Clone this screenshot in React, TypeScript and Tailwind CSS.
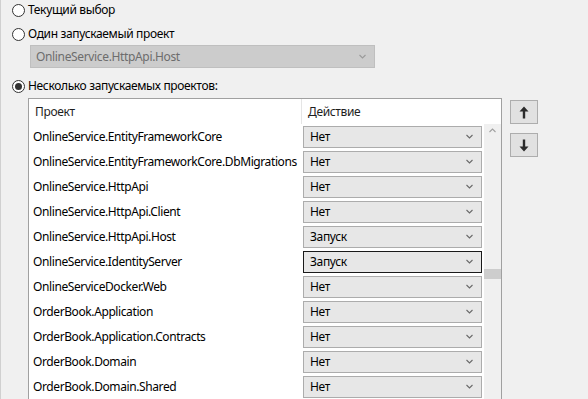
import React from "react";

const rows: [string, string][] = [
  ["OnlineService.EntityFrameworkCore", "Нет"],
  ["OnlineService.EntityFrameworkCore.DbMigrations", "Нет"],
  ["OnlineService.HttpApi", "Нет"],
  ["OnlineService.HttpApi.Client", "Нет"],
  ["OnlineService.HttpApi.Host", "Запуск"],
  ["OnlineService.IdentityServer", "Запуск"],
  ["OnlineServiceDocker.Web", "Нет"],
  ["OrderBook.Application", "Нет"],
  ["OrderBook.Application.Contracts", "Нет"],
  ["OrderBook.Domain", "Нет"],
  ["OrderBook.Domain.Shared", "Нет"],
];

function Chevron({ color = "#707070", up = false }: { color?: string; up?: boolean }) {
  return (
    <svg width="7" height="5" viewBox="0 0 7 5" className="shrink-0">
      <path
        d={up ? "M0.5 4 L3.5 1 L6.5 4" : "M0.5 1 L3.5 4 L6.5 1"}
        fill="none"
        stroke={color}
        strokeWidth="1.1"
      />
    </svg>
  );
}

function Radio({ checked, label }: { checked?: boolean; label: string }) {
  return (
    <div className="flex items-center h-[16px] pl-[11px] shrink-0">
      <div className="w-[13px] h-[13px] rounded-full border border-[#333333] bg-white flex items-center justify-center">
        {checked && <div className="w-[7px] h-[7px] rounded-full bg-[#333333]" />}
      </div>
      <span className="ml-[3px] text-[12px] text-black leading-none tracking-[-0.35px]">{label}</span>
    </div>
  );
}

function Arrow({ down }: { down?: boolean }) {
  return (
    <svg width="10" height="13" viewBox="0 0 10 13" style={down ? { transform: "rotate(180deg)" } : undefined}>
      <path d="M5 0.5 L9.5 5.5 L6.2 5.5 L6.2 12.5 L3.8 12.5 L3.8 5.5 L0.5 5.5 Z" fill="#2b2b2b" />
    </svg>
  );
}

export default function App() {
  return (
    <div
      className="w-[588px] h-[399px] bg-[#f0f0f0] overflow-hidden flex flex-col border-l border-[#d0d0d0]"
      style={{ fontFamily: '"Noto Sans", "Open Sans", sans-serif' }}
    >
      <div className="pt-[2px] shrink-0">
        <Radio label="Текущий выбор" />
      </div>
      <div className="pt-[8px] shrink-0">
        <Radio label="Один запускаемый проект" />
      </div>
      <div className="shrink-0 mt-[3px] ml-[29px] w-[345px] h-[23px] bg-[#cccccc] border border-[#bfbfbf] flex items-center justify-between pl-[5px] pr-[8px]">
        <span className="text-[12px] text-[#6d6d6d] leading-none tracking-[-0.35px]">OnlineService.HttpApi.Host</span>
        <Chevron color="#9a9a9a" />
      </div>
      <div className="pt-[10px] shrink-0">
        <Radio checked label="Несколько запускаемых проектов:" />
      </div>
      <div className="flex mt-[4px] ml-[27px] shrink-0">
        <div className="w-[474px] h-[320px] border border-[#a0a0a0] bg-white flex overflow-hidden shrink-0">
          <div className="w-[454px] flex flex-col">
            <div className="flex h-[25px] shrink-0">
              <div className="w-[273px] flex items-center pl-[6px] text-[12px] text-[#1e1e1e] border-r border-[#e5e5e5] tracking-[-0.35px]">
                Проект
              </div>
              <div className="flex-1 flex items-center pl-[6px] text-[12px] text-[#1e1e1e] tracking-[-0.35px]">Действие</div>
            </div>
            {rows.map(([name, action], i) => (
              <div key={i} className="flex h-[25px] shrink-0">
                <div className="w-[273px] flex items-center pl-[4px] text-[12px] text-black whitespace-nowrap overflow-hidden tracking-[-0.4px]">
                  {name}
                </div>
                <div className="flex-1 flex items-center pl-[1px] pr-[1px]">
                  <div
                    className={
                      "w-full h-[22px] flex items-center justify-between pl-[6px] pr-[8px] bg-[#e7e7e7] " +
                      (i === 5 ? "border border-[#1a1a1a]" : "border border-[#acacac]")
                    }
                  >
                    <span className="text-[12px] text-black leading-none tracking-[-0.35px]">{action}</span>
                    <Chevron color="#6a6a6a" />
                  </div>
                </div>
              </div>
            ))}
          </div>
          <div className="w-[17px] bg-[#f0f0f0] flex flex-col items-center ml-auto">
            <div className="h-[25px] w-full bg-white shrink-0" />
            <div className="mt-[4px] shrink-0">
              <Chevron color="#a0a0a0" up />
            </div>
            <div className="mt-[136px] w-full h-[10px] bg-[#cdcdcd] shrink-0" />
          </div>
        </div>
        <div className="ml-[8px] mt-[2px] flex flex-col gap-[9px]">
          <div className="w-[28px] h-[24px] bg-[#e1e1e1] border border-[#adadad] flex items-center justify-center">
            <Arrow />
          </div>
          <div className="w-[28px] h-[24px] bg-[#e1e1e1] border border-[#adadad] flex items-center justify-center">
            <Arrow down />
          </div>
        </div>
      </div>
    </div>
  );
}
